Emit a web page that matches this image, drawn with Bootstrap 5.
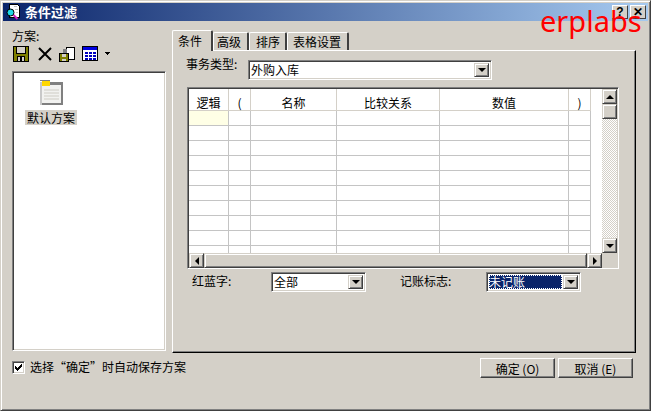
<!DOCTYPE html>
<html lang="zh">
<head>
<meta charset="utf-8">
<title>条件过滤</title>
<link href="https://cdn.jsdelivr.net/npm/bootstrap@5.3.0/dist/css/bootstrap.min.css" rel="stylesheet">
<style>
html,body{margin:0;padding:0;background:#d4d0c8;}
body{font-family:"Noto Sans CJK SC","Liberation Sans",sans-serif;font-size:12px;line-height:14px;color:#000;}
.dlg{width:651px;height:411px;overflow:hidden;position:relative;background:#d4d0c8;border:1px solid;border-color:#d4d0c8 #404040 #404040 #d4d0c8;box-shadow:inset 1px 1px 0 #fff,inset -1px -1px 0 #808080;}
.ttl{margin:2px 2px 0 2px;height:18px;padding:0 2px 0 3px;background:linear-gradient(90deg,#0a246a,#a6caf0);color:#fff;font-weight:700;font-size:13px;line-height:18px;}
.ttl-txt{margin-left:3px;}
.capbtn{width:16px;height:14px;background:#d4d0c8;border:1px solid;border-color:#fff #404040 #404040 #fff;font-size:12px;line-height:12px;color:#000;font-weight:700;text-align:center;font-family:"Liberation Sans",sans-serif;}
.capgap{margin-right:2px;}
.wm{position:absolute;left:539px;top:-1px;font-family:"Noto Sans","Liberation Sans",sans-serif;font-size:29px;line-height:42px;color:#f00;}
.main{padding-left:11px;height:332px;}
.lcol{width:154px;margin-right:6px;padding-top:8px;}
.lbl-fa{height:16px;}
.tools{height:18px;margin-bottom:8px;padding-left:1px;}
.ic-x{margin-left:8px;}.ic-c{margin-left:6px;}.ic-g{margin-left:6px;}.ic-a{margin-left:5px;}
.lst{height:280px;background:#fff;border:1px solid;border-color:#808080 #fff #fff #808080;box-shadow:inset 1px 1px 0 #404040,inset -1px -1px 0 #d4d0c8;}
.schm{width:52px;margin:8px 0 0 12px;text-align:center;}
.schm svg{display:block;margin:0 auto;}
.schm span{display:block;background:#d4d0c8;white-space:nowrap;height:15px;line-height:15px;margin-top:5px;}
.rcol{width:464px;padding-top:9px;}
.tabstrip{border:0;height:20px;position:relative;z-index:2;flex-wrap:nowrap;}
.tabstrip .nav-link{height:18px;margin:2px 0 0 0;padding:1px 0 0 5px;font-size:12px;line-height:15px;color:#000;background:#d4d0c8;border:1px solid;border-width:1px 2px 0 1px;border-color:#fff #404040 #d4d0c8 #fff;border-radius:2px 2px 0 0;white-space:nowrap;}
.tabstrip .nav-link.active{height:21px;margin:0;padding:2px 0 0 5px;background:#d4d0c8;color:#000;border-color:#fff #404040 #d4d0c8 #fff;}
.tab-a{width:41px;}.tab-b{width:36px;}.tab-c{width:38px;}.tab-d{width:62px;}
.tabstrip .tab-b .nav-link{padding-left:3px;}
.tabstrip .tab-c .nav-link{padding-left:6px;}
.pane{height:303px;width:464px;border:1px solid;border-color:#fff #000 #000 #fff;box-shadow:inset -1px -1px 0 #808080;padding:9px 0 0 14px;}
.row-1{height:20px;margin-bottom:7px;}
.lab-1{width:62px;margin-left:-1px;margin-top:-3px;}
.combo{height:20px;display:flex;background:#fff;border:1px solid;border-color:#808080 #fff #fff #808080;box-shadow:inset 1px 1px 0 #404040,inset -1px -1px 0 #d4d0c8;padding:1px;}
.combo-t{flex:1;height:14px;line-height:14px;margin:1px;font-size:12px;white-space:nowrap;}
.combo-sel{background:#0a246a;color:#fff;outline:1px dotted #fff;outline-offset:-1px;}
.cb-1{width:244px;}.cb-2{width:95px;}.cb-3{width:95px;}
.sbtn{flex:none;width:15px;background:#d4d0c8;border:1px solid;border-color:#d4d0c8 #404040 #404040 #d4d0c8;box-shadow:inset 1px 1px 0 #fff,inset -1px -1px 0 #808080;display:flex;align-items:center;justify-content:center;}
.combo .sbtn{margin:1px 1px 1px 0;}
.tri-d{width:0;height:0;border:4px solid transparent;border-top-color:#000;border-bottom-width:0;}
.tri-u{width:0;height:0;border:4px solid transparent;border-bottom-color:#000;border-top-width:0;}
.tri-l{width:0;height:0;border:4px solid transparent;border-right-color:#000;border-left-width:0;}
.tri-r{width:0;height:0;border:4px solid transparent;border-left-color:#000;border-right-width:0;}
.gridbox{width:432px;height:182px;border:1px solid;border-color:#808080 #fff #fff #808080;box-shadow:inset 1px 1px 0 #404040,inset -1px -1px 0 #d4d0c8;padding:1px;margin-bottom:3px;}
.gleft{width:413px;}
.tbl-wrap{height:164px;overflow:hidden;background:#fff;}
.gtbl.table{width:402px;table-layout:fixed;margin:0;border-collapse:separate;border-spacing:0;font-size:12px;}
.gtbl.table>*>*>*{padding:0;border:0;border-right:1px solid #c4c4c4;border-bottom:1px solid #c4c4c4;background:#fff;box-shadow:none;text-align:center;font-weight:400;height:15px;line-height:14px;color:#000;white-space:nowrap;}
.gtbl.table>thead>tr>*{height:22px;border-bottom-color:#d4d0c8;border-right-color:#d4d0c8;}
.gtbl.table>tbody>tr:first-child>td:first-child{background:#ffffe6;}
.c-1{width:40px;}.c-2{width:22px;}.c-3{width:86px;}.c-4{width:103px;}.c-5{width:129px;}.c-6{width:22px;}
.hbar{height:15px;}
.hbar .sbtn,.vbar .sbtn{width:15px;height:15px;}
.hthumb{flex:1;background:#d4d0c8;border:1px solid;border-color:#d4d0c8 #404040 #404040 #d4d0c8;box-shadow:inset 1px 1px 0 #fff,inset -1px -1px 0 #808080;}
.vbar{width:15px;height:164px;}
.vthumb{height:15px;background:#d4d0c8;border:1px solid;border-color:#d4d0c8 #404040 #404040 #d4d0c8;box-shadow:inset 1px 1px 0 #fff,inset -1px -1px 0 #808080;}
.vtrack{flex:1;background-color:#fff;background-image:conic-gradient(#d4d0c8 25%,#fff 0 50%,#d4d0c8 0 75%,#fff 0);background-size:2px 2px;}
.row-3{height:20px;}
.lab-2{width:84px;padding-left:5px;margin-top:-2px;}
.lab-3{width:86px;margin:-2px 0 0 34px;}
.foot{padding:5px 0 0 11px;}
.chk{width:13px;height:13px;flex:none;background:#fff;margin-top:3px;margin-right:5px;border:1px solid;border-color:#808080 #fff #fff #808080;box-shadow:inset 1px 1px 0 #404040,inset -1px -1px 0 #d4d0c8;}
.chk svg{display:block;}
.chk-t{padding-top:2px;white-space:nowrap;}
.wbtn{width:75px;height:20px;padding:0;border-radius:0;font-size:12px;line-height:15px;color:#000;background:#d4d0c8;border:1px solid;border-color:#fff #404040 #404040 #fff;box-shadow:inset -1px -1px 0 #808080;}
.wbtn:hover{color:#000;background:#d4d0c8;border-color:#fff #404040 #404040 #fff;}
.btns{gap:3px;margin-left:auto;margin-right:17px;}
svg{shape-rendering:crispEdges;flex:none;}
svg .sm{shape-rendering:auto;}
</style>
</head>
<body>
<div class="dlg">
  <div class="ttl d-flex align-items-center">
    <svg width="16" height="16" viewBox="0 0 16 16"><path fill="#fff" stroke="#000" d="M3.500 .5h8l2 2v11h-10z"/><path fill="#c0c0c0" d="M8 2h3v1H8zM9 5h3v1H9zM10 8h2v1h-2z"/><circle class="sm" cx="4.500" cy="8.500" r="3.500" fill="#20d8e8" stroke="#000"/><path class="sm" stroke="#d020c0" stroke-width="2" d="M7.500 11l4 4"/></svg>
    <span class="ttl-txt">条件过滤</span>
    <div class="ms-auto d-flex">
      <div class="capbtn capgap">?</div>
      <div class="capbtn">✕</div>
    </div>
  </div>
  <div class="wm">erplabs</div>

  <div class="main d-flex">
    <div class="lcol">
      <div class="lbl-fa">方案:</div>
      <div class="tools d-flex align-items-center">
        <svg width="16" height="16" viewBox="0 0 16 16"><path fill="#808000" d="M1 1h14v14H1z"/><path fill="#000" d="M0 0h16v1H0zM0 0h1v16H0zM15 0h1v16h-1zM0 15h16v1H0z"/><path fill="#d4d0c8" d="M4 1h8v6H4z"/><path fill="#000" d="M3 1h1v7H3zM12 1h1v7h-1zM3 7h10v1H3zM4 10h8v6H4z"/><path fill="#d4d0c8" d="M5 11h6v4H5z"/><path fill="#000" d="M7 11h2v4H7z"/></svg>
        <svg class="ic-x" width="16" height="16" viewBox="0 0 16 16"><path class="sm" stroke="#000" stroke-width="2" fill="none" d="M2 2l12 12M14 2L2 14"/></svg>
        <svg class="ic-c" width="17" height="17" viewBox="0 0 17 17"><path fill="#fff" stroke="#000" d="M7.500 1.500h8v12h-8z"/><path fill="#808080" d="M4 3h4v5H4z"/><path fill="#808000" stroke="#000" d="M.5 7.500h9v8h-9z"/><path fill="#d4d0c8" d="M3 8h4v3H3zM3 13h4v2H3z"/></svg>
        <svg class="ic-g" width="17" height="16" viewBox="0 0 17 16"><path fill="#fff" stroke="#000" d="M.5 .5h15v14H.5z"/><path fill="#0000e0" d="M1 1h14v3H1z"/><path fill="#0000c0" d="M3 6h3v2H3zM7 6h3v2H7zM11 6h3v2h-3zM3 9h3v2H3zM7 9h3v2H7zM11 9h3v2h-3zM3 12h3v2H3zM7 12h3v2H7zM11 12h3v2h-3z"/></svg>
        <svg class="ic-a" width="8" height="8" viewBox="0 0 8 8"><path fill="#000" d="M1 2h5v1H1zM2 3h3v1H2zM3 4h1v1H3z"/></svg>
      </div>
      <div class="lst">
        <div class="schm">
          <svg width="23" height="25" viewBox="0 0 23 25"><path fill="#808080" d="M0 2h23v23H0z"/><path fill="#c8c8c8" d="M0 2h2v23H0z"/><path fill="#f2f2f0" d="M2 5h19v18H2z"/><path fill="#ffd800" d="M2 1h8v5H2z"/><path fill="#808080" d="M0 0h10v1H0z"/><path fill="#e0dfda" d="M4 9h15v2H4zM4 12h15v2H4zM4 15h15v2H4zM4 18h15v2H4z"/></svg>
          <span>默认方案</span>
        </div>
      </div>
    </div>

    <div class="rcol">
      <ul class="nav nav-tabs tabstrip">
        <li class="nav-item tab-a"><a class="nav-link active" href="#">条件</a></li>
        <li class="nav-item tab-b"><a class="nav-link" href="#">高级</a></li>
        <li class="nav-item tab-c"><a class="nav-link" href="#">排序</a></li>
        <li class="nav-item tab-d"><a class="nav-link" href="#">表格设置</a></li>
      </ul>
      <div class="pane">
        <div class="row-1 d-flex">
          <div class="lab-1">事务类型:</div>
          <div class="combo cb-1"><div class="combo-t">外购入库</div><div class="sbtn"><i class="tri-d"></i></div></div>
        </div>
        <div class="gridbox d-flex">
          <div class="gleft">
            <div class="tbl-wrap">
              <table class="table gtbl">
                <thead><tr><th class="c-1">逻辑</th><th class="c-2">(</th><th class="c-3">名称</th><th class="c-4">比较关系</th><th class="c-5">数值</th><th class="c-6">)</th></tr></thead>
                <tbody>
                  <tr><td></td><td></td><td></td><td></td><td></td><td></td></tr>
                  <tr><td></td><td></td><td></td><td></td><td></td><td></td></tr>
                  <tr><td></td><td></td><td></td><td></td><td></td><td></td></tr>
                  <tr><td></td><td></td><td></td><td></td><td></td><td></td></tr>
                  <tr><td></td><td></td><td></td><td></td><td></td><td></td></tr>
                  <tr><td></td><td></td><td></td><td></td><td></td><td></td></tr>
                  <tr><td></td><td></td><td></td><td></td><td></td><td></td></tr>
                  <tr><td></td><td></td><td></td><td></td><td></td><td></td></tr>
                  <tr><td></td><td></td><td></td><td></td><td></td><td></td></tr>
                  <tr><td></td><td></td><td></td><td></td><td></td><td></td></tr>
                </tbody>
              </table>
            </div>
            <div class="hbar d-flex">
              <div class="sbtn"><i class="tri-l"></i></div>
              <div class="hthumb"></div>
              <div class="sbtn"><i class="tri-r"></i></div>
            </div>
          </div>
          <div class="vbar d-flex flex-column">
            <div class="sbtn"><i class="tri-u"></i></div>
            <div class="vthumb"></div>
            <div class="vtrack"></div>
            <div class="sbtn"><i class="tri-d"></i></div>
          </div>
        </div>
        <div class="row-3 d-flex align-items-center">
          <div class="lab-2">红蓝字:</div>
          <div class="combo cb-2"><div class="combo-t">全部</div><div class="sbtn"><i class="tri-d"></i></div></div>
          <div class="lab-3">记账标志:</div>
          <div class="combo cb-3"><div class="combo-t combo-sel">未记账</div><div class="sbtn"><i class="tri-d"></i></div></div>
        </div>
      </div>
    </div>
  </div>

  <div class="foot d-flex">
    <div class="chk"><svg width="11" height="11" viewBox="0 0 11 11"><path fill="#000" d="M2 4h1v3H2zM3 5h1v3H3zM4 6h1v3H4zM5 5h1v3H5zM6 4h1v3H6zM7 3h1v3H7zM8 2h1v3H8z"/></svg></div>
    <div class="chk-t">选择“确定”时自动保存方案</div>
    <div class="btns d-flex">
      <button type="button" class="btn wbtn">确定 (O)</button>
      <button type="button" class="btn wbtn">取消 (E)</button>
    </div>
  </div>
</div>
<script src="https://cdn.jsdelivr.net/npm/bootstrap@5.3.0/dist/js/bootstrap.bundle.min.js"></script>
</body>
</html>
